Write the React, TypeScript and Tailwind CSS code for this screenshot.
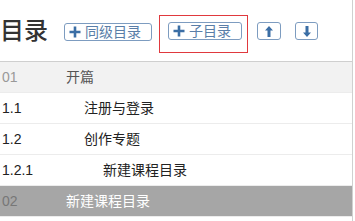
const font = { fontFamily: '"Liberation Sans", "Noto Sans CJK SC", sans-serif' }

function PlusIcon() {
  return (
    <svg width="12" height="12" viewBox="0 0 12 12" className="shrink-0">
      <path d="M6 0.5v11M0.5 6h11" stroke="#3b6ea5" strokeWidth="2.6" />
    </svg>
  )
}

function ArrowIcon({ down }: { down?: boolean }) {
  return (
    <svg width="8" height="11" viewBox="0 0 8 11" className={down ? 'rotate-180' : ''}>
      <path d="M4 0L8 4.5H5.5V11H2.5V4.5H0Z" fill="#3b6ea5" />
    </svg>
  )
}

function ToolButton({ label, className }: { label: string; className: string }) {
  return (
    <button
      type="button"
      className={`flex h-[18px] items-center gap-[4px] rounded-[3px] border border-[#7d9cc0] pl-[4px] text-[14px] leading-none text-[#5a7ea8] ${className}`}
    >
      <PlusIcon />
      <span>{label}</span>
    </button>
  )
}

const rows = [
  { no: '01', label: '开篇', indent: 'pl-[66px]', bg: 'bg-[#f2f2f2]', noColor: 'text-[#999]', textColor: 'text-[#555]' },
  { no: '1.1', label: '注册与登录', indent: 'pl-[84px]', bg: 'bg-white', noColor: 'text-[#222]', textColor: 'text-[#222]' },
  { no: '1.2', label: '创作专题', indent: 'pl-[84px]', bg: 'bg-white', noColor: 'text-[#222]', textColor: 'text-[#222]' },
  { no: '1.2.1', label: '新建课程目录', indent: 'pl-[103px]', bg: 'bg-white', noColor: 'text-[#222]', textColor: 'text-[#222]' },
  { no: '02', label: '新建课程目录', indent: 'pl-[66px]', bg: 'bg-[#a6a6a6]', noColor: 'text-[#777]', textColor: 'text-white' },
]

export default function App() {
  return (
    <div className="h-[221px] w-[355px] overflow-hidden bg-white" style={font}>
      <div className="h-full w-[353px] border-r border-[#d0d0d0]">
        <div className="flex h-[62px] items-start border-b border-[#cfcfcf]">
          <h1 className="mt-[17px] text-[24px] leading-[28px] font-medium text-[#333]">目录</h1>
          <ToolButton label="同级目录" className="ml-[16px] mt-[23px] w-[88px]" />
          <div className="ml-[7px] mt-[15px] border border-[#e0393e] pt-[6px] pr-[5px] pb-[12px] pl-[8px]">
            <ToolButton label="子目录" className="w-[74px]" />
          </div>
          <button
            type="button"
            className="ml-[9px] mt-[22px] flex h-[18px] w-[24px] items-center justify-center rounded-[3px] border border-[#7d9cc0]"
          >
            <ArrowIcon />
          </button>
          <button
            type="button"
            className="ml-[14px] mt-[22px] flex h-[18px] w-[23px] items-center justify-center rounded-[3px] border border-[#7d9cc0]"
          >
            <ArrowIcon down />
          </button>
        </div>
        {rows.map((r) => (
          <div
            key={r.no + r.label}
            className={`relative flex h-[31px] items-center border-b border-[#ececec] text-[14px] ${r.bg}`}
          >
            <span className={`absolute left-[2px] ${r.noColor}`}>{r.no}</span>
            <span className={`${r.indent} ${r.textColor}`}>{r.label}</span>
          </div>
        ))}
      </div>
    </div>
  )
}
